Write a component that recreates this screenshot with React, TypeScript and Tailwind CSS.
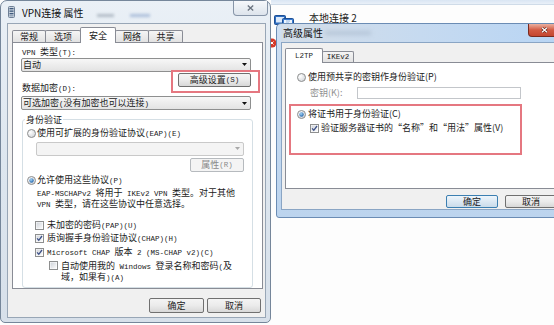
import { useId } from "react";
import type { ReactNode } from "react";

function sid(id: string) {
  return "g" + id.replace(/[^a-zA-Z0-9]/g, "");
}

function Mix({ text }: { text: string }) {
  const parts = text.split(/([\x20-\x7e]+)/).filter((p) => p.length > 0);
  return (
    <>
      {parts.map((p, i) =>
        /^[\x20-\x7e]+$/.test(p) ? (
          <span key={i} className="whitespace-pre font-['Liberation_Mono',monospace] text-[7.5px]">
            {p}
          </span>
        ) : (
          <span key={i}>{p}</span>
        )
      )}
    </>
  );
}

function CheckBox({ checked = false }: { checked?: boolean }) {
  const g = sid(useId());
  return (
    <svg width="9" height="9" viewBox="0 0 9 9" className="shrink-0">
      <defs>
        <linearGradient id={g} x1="0" y1="0" x2="1" y2="1">
          <stop offset="0" stopColor="#cfd3d9" />
          <stop offset="1" stopColor="#fbfbfb" />
        </linearGradient>
      </defs>
      <rect x="0.5" y="0.5" width="8" height="8" fill="#ffffff" stroke="#8e8f8f" />
      <rect x="1.5" y="1.5" width="6" height="6" fill={`url(#${g})`} />
      {checked && <path d="M2.1 4.3 L3.8 6.3 L7 2" fill="none" stroke="#3b4f86" strokeWidth="1.3" />}
    </svg>
  );
}

function Radio({ checked = false }: { checked?: boolean }) {
  const g = sid(useId());
  return (
    <svg width="9" height="9" viewBox="0 0 9 9" className="shrink-0">
      <defs>
        <radialGradient id={g + "a"} cx="0.35" cy="0.35" r="0.8">
          <stop offset="0" stopColor="#ffffff" />
          <stop offset="1" stopColor="#cdd1d6" />
        </radialGradient>
        <radialGradient id={g + "b"} cx="0.4" cy="0.35" r="0.7">
          <stop offset="0" stopColor="#a6d6f7" />
          <stop offset="1" stopColor="#1b5ea6" />
        </radialGradient>
      </defs>
      <circle cx="4.5" cy="4.5" r="4" fill={`url(#${g}a)`} stroke="#8e8f8f" />
      {checked && <circle cx="4.5" cy="4.5" r="2.2" fill={`url(#${g}b)`} />}
    </svg>
  );
}

function Arrow({ disabled = false }: { disabled?: boolean }) {
  return (
    <svg width="5" height="3" viewBox="0 0 5 3" className="shrink-0">
      <path d="M0 0 H5 L2.5 3 Z" fill={disabled ? "#a8a8a8" : "#111111"} />
    </svg>
  );
}

function Combo({ text, disabled = false, className = "" }: { text: string; disabled?: boolean; className?: string }) {
  return (
    <div
      className={`flex h-[14px] items-center justify-between rounded-[2px] border pl-[1px] pr-[3px] ${
        disabled ? "border-[#c9c9c9] bg-[#f4f4f4]" : "border-[#8e8f8f] bg-gradient-to-b from-[#f7f7f7] to-[#e3e3e3]"
      } ${className}`}
    >
      <span className="whitespace-nowrap leading-[10px]">
        <Mix text={text} />
      </span>
      <Arrow disabled={disabled} />
    </div>
  );
}

function Btn({
  children,
  className = "",
  disabled = false,
  def = false,
}: {
  children: ReactNode;
  className?: string;
  disabled?: boolean;
  def?: boolean;
}) {
  const look = disabled
    ? "border-[#b6babe] bg-[#f4f4f4] text-[#8a8a8a]"
    : def
    ? "border-[#3c7fb1] bg-gradient-to-b from-[#eef6fc] to-[#cadbea]"
    : "border-[#707070] bg-gradient-to-b from-[#f4f4f4] via-[#ebebeb] to-[#d8d8d8]";
  return (
    <div className={`flex shrink-0 items-center justify-center rounded-[2px] border leading-[10px] ${look} ${className}`}>
      {children}
    </div>
  );
}

function CheckRow({ checked, text, className = "" }: { checked?: boolean; text: string; className?: string }) {
  return (
    <div className={`flex h-[10px] items-center gap-[3px] whitespace-nowrap leading-[10px] ${className}`}>
      <CheckBox checked={checked} />
      <span>
        <Mix text={text} />
      </span>
    </div>
  );
}

const leftTabs = [
  { label: "常规", cls: "w-[34px]" },
  { label: "选项", cls: "-ml-px w-[36px]" },
  { label: "安全", cls: "-ml-px w-[36px]", sel: true },
  { label: "网络", cls: "-ml-px w-[34px]" },
  { label: "共享", cls: "-ml-px w-[35px]" },
];

function LeftWindow() {
  return (
    <div className="flex h-[323px] w-[271px] shrink-0 flex-col rounded-t-[7px] rounded-b-[5px] border border-[#75869a] bg-gradient-to-b from-[#eaf0f6] via-[#dde6ef] to-[#d7e0ea] pb-[4px] pl-[6px] pr-[4px]">
      {/* title bar */}
      <div className="flex h-[22px] shrink-0 items-start">
        <svg width="7" height="12" viewBox="0 0 7 12" className="ml-[1px] mt-[5px] shrink-0">
          <rect x="0.5" y="0.5" width="6" height="11" rx="1" fill="#c9d3de" stroke="#6f8096" />
          <rect x="1.5" y="2" width="4" height="1.3" fill="#3f5a7c" />
          <rect x="1.5" y="4.5" width="4" height="1.3" fill="#3f5a7c" />
          <rect x="1.5" y="7" width="4" height="1.3" fill="#3f5a7c" />
          <rect x="1.5" y="9.3" width="4" height="1" fill="#7f93ab" />
        </svg>
        <span className="ml-[7px] mt-[5px] whitespace-nowrap text-[10px] leading-[13px] text-[#111]">VPN连接 属性</span>
        <span className="ml-[13px] mt-[13px] h-[3px] w-[17px] bg-[#8c98a6] opacity-60 blur-[1.5px]" />
        <span className="ml-[16px] mt-[13px] h-[3px] w-[20px] bg-[#6f8fc0] opacity-50 blur-[1.5px]" />
        <div className="ml-auto mr-[-2px] flex h-[15px] w-[35px] items-center justify-center rounded-b-[4px] border border-t-0 border-[#8795a8] bg-gradient-to-b from-[#f6f8fb] to-[#dde4ec]">
          <svg width="7" height="6" viewBox="0 0 7 6">
            <path d="M0.8 0.6 L6.2 5.4 M6.2 0.6 L0.8 5.4" stroke="#6b7480" strokeWidth="1.4" />
          </svg>
        </div>
      </div>

      {/* client area */}
      <div className="flex flex-1 flex-col border border-[#98a6b6] bg-[#f0f0f0] pl-[4px] pr-[2px]">
        {/* tabs */}
        <div className="mt-[3px] flex h-[15px] items-end">
          {leftTabs.map((t) =>
            t.sel ? (
              <div
                key={t.label}
                className={`relative z-10 mb-[-1px] flex h-[16px] items-center justify-center rounded-t-[2px] border border-b-0 border-[#898c95] bg-white leading-[10px] ${t.cls}`}
              >
                {t.label}
              </div>
            ) : (
              <div
                key={t.label}
                className={`flex h-[12px] items-center justify-center rounded-t-[2px] border border-b-0 border-[#898c95] bg-gradient-to-b from-[#f5f5f5] to-[#e2e2e2] leading-[10px] ${t.cls}`}
              >
                {t.label}
              </div>
            )
          )}
        </div>

        {/* panel */}
        <div className="flex h-[247px] flex-col border border-[#898c95] bg-white pl-[8px]">
          <div className="ml-[1px] mt-[4px] h-[10px] whitespace-nowrap leading-[10px]">
            <Mix text="VPN 类型(T):" />
          </div>
          <Combo text="自动" className="mt-[1px] w-[230px]" />
          <div className="mt-[1px] flex h-[22px] w-[230px] justify-between">
            <div className="ml-[1px] self-end whitespace-nowrap leading-[10px]">
              <Mix text="数据加密(D):" />
            </div>
            <div className="relative self-start">
              <Btn className="h-[14px] w-[73px]">
                <Mix text="高级设置(S)" />
              </Btn>
              <div className="absolute -bottom-[6px] -left-[7px] -right-[9px] -top-[3px] border-2 border-[#e57780]" />
            </div>
          </div>
          <Combo text="可选加密(没有加密也可以连接)" className="mt-[2px] w-[230px]" />

          <fieldset className="ml-[1px] mt-[5px] w-[231px] rounded-[3px] border border-[#d5dfe5] pb-[4px] pl-[4px]">
            <legend className="ml-[-2px] px-[1px] leading-[10px]">身份验证</legend>
            <div className="mt-[4px] flex h-[10px] items-center gap-[1px] whitespace-nowrap leading-[10px]">
              <Radio />
              <span>
                <Mix text="使用可扩展的身份验证协议(EAP)(E)" />
              </span>
            </div>
            <Combo text="" disabled className="ml-[9px] mt-[3px] w-[208px]" />
            <Btn disabled className="ml-[163px] mt-[2px] h-[14px] w-[54px]">
              <Mix text="属性(R)" />
            </Btn>
            <div className="mt-[4px] flex h-[10px] items-center gap-[1px] whitespace-nowrap leading-[10px]">
              <Radio checked />
              <span>
                <Mix text="允许使用这些协议(P)" />
              </span>
            </div>
            <div className="ml-[10px] mt-[2px] whitespace-nowrap leading-[9px]">
              <div>
                <Mix text="EAP-MSCHAPv2 将用于 IKEv2 VPN 类型。对于其他" />
              </div>
              <div>
                <Mix text="VPN 类型，请在这些协议中任意选择。" />
              </div>
            </div>
            <CheckRow text="未加密的密码(PAP)(U)" className="ml-[8px] mt-[11px]" />
            <CheckRow checked text="质询握手身份验证协议(CHAP)(H)" className="ml-[8px] mt-[3px]" />
            <CheckRow checked text="Microsoft CHAP 版本 2 (MS-CHAP v2)(C)" className="ml-[8px] mt-[4px]" />
            <div className="ml-[22px] mt-[3px] flex items-start gap-[3px] whitespace-nowrap leading-[9px]">
              <CheckBox />
              <div>
                <div>
                  <Mix text="自动使用我的 Windows 登录名称和密码(及" />
                </div>
                <div>
                  <Mix text="域，如果有)(A)" />
                </div>
              </div>
            </div>
          </fieldset>
        </div>

        {/* buttons */}
        <div className="mr-[2px] mt-[9px] flex h-[15px] justify-end gap-[3px]">
          <Btn className="h-[15px] w-[55px]">确定</Btn>
          <Btn className="h-[15px] w-[54px]">取消</Btn>
        </div>
      </div>
    </div>
  );
}

function NetIcon() {
  return (
    <svg width="22" height="15" viewBox="0 0 22 15" className="ml-[3px] mt-[9px] shrink-0 overflow-visible">
      <rect x="0.5" y="1.5" width="11" height="9" rx="1" fill="#2d6cc0" stroke="#1d4f94" />
      <rect x="2" y="3" width="8" height="5.5" fill="#dbe9fa" />
      <rect x="8.5" y="4.5" width="11" height="9" rx="1" fill="#3a7bd0" stroke="#1d4f94" />
      <rect x="10" y="6" width="8" height="5.5" fill="#eef5fd" />
      <path d="M12 7 L16 7 M12 9 L15 9" stroke="#7fa8dc" strokeWidth="0.8" />
    </svg>
  );
}

function RightArea() {
  return (
    <div className="relative flex flex-1 flex-col bg-[#fdfdfd]">
      <div className="h-[5px] shrink-0 border-b border-[#cfdbe8] bg-gradient-to-b from-[#d9e5f3] to-[#e9f0f8]" />
      <svg width="6" height="10" viewBox="0 0 6 10" className="absolute left-0 top-[38px]">
        <circle cx="1" cy="5" r="4.5" fill="#d43a2a" />
        <path d="M-0.5 3.5 L2.5 6.5 M2.5 3.5 L-0.5 6.5" stroke="#fff" strokeWidth="1" />
      </svg>
      <div className="flex h-[18px] shrink-0 items-start">
        <NetIcon />
        <span className="ml-[13px] mt-[8px] whitespace-nowrap text-[10px] leading-[10px] text-[#222]">本地连接 2</span>
      </div>

      {/* dialog */}
      <div className="relative z-10 ml-[5px] flex h-[195px] w-[290px] shrink-0 flex-col rounded-t-[5px] rounded-b-[3px] border border-[#6b8cb4] bg-gradient-to-b from-[#cfe0f3] to-[#bcd4ee] pb-[7px] pl-[4px] pr-[4px]">
        <div className="flex h-[18px] shrink-0 items-center bg-gradient-to-r from-[#d3dde8] via-[#c6daf0] to-[#b8d5f4]">
          <span className="ml-[2px] whitespace-nowrap text-[10px] leading-[12px] text-[#111]">高级属性</span>
          <span className="ml-[2px] h-[4px] w-[46px] bg-[#9fb0c3] opacity-50 blur-[2px]" />
        </div>
        <div className="absolute right-[5px] top-0 flex h-[13px] w-[32px] items-center justify-center rounded-b-[4px] border border-t-0 border-[#7a2a1e] bg-gradient-to-b from-[#eab0a0] via-[#d25a43] to-[#c44630]">
          <svg width="7" height="6" viewBox="0 0 7 6">
            <path d="M1 0.8 L6 5.2 M6 0.8 L1 5.2" stroke="#5a1a10" strokeWidth="2.4" />
            <path d="M1 0.8 L6 5.2 M6 0.8 L1 5.2" stroke="#ffffff" strokeWidth="1.3" />
          </svg>
        </div>

        <div className="flex flex-1 flex-col border border-[#8aa5c4] bg-[#f0f0f0] pl-[3px]">
          <div className="mt-[5px] flex h-[14px] items-end">
            <div className="relative z-10 mb-[-1px] flex h-[15px] w-[38px] items-center justify-center rounded-t-[2px] border border-b-0 border-[#898c95] bg-white leading-[10px]">
              <Mix text="L2TP" />
            </div>
            <div className="-ml-px flex h-[11px] w-[32px] items-center justify-center rounded-t-[2px] border border-b-0 border-[#898c95] bg-gradient-to-b from-[#f5f5f5] to-[#e2e2e2] leading-[10px]">
              <Mix text="IKEv2" />
            </div>
          </div>
          <div className="flex h-[127px] w-[271px] flex-col border border-[#898c95] bg-white">
            <div className="ml-[11px] mt-[9px] flex h-[10px] items-center gap-[2px] whitespace-nowrap leading-[10px]">
              <Radio />
              <span>使用预共享的密钥作身份验证(P)</span>
            </div>
            <div className="ml-[24px] mt-[5px] flex h-[12px] items-center whitespace-nowrap leading-[10px]">
              <span className="w-[47px] text-[#8f8f8f]">密钥(K):</span>
              <div className="h-[12px] w-[164px] border border-[#c3c6ca] bg-white" />
            </div>
            <div className="ml-[3px] mt-[5px] h-[51px] w-[233px] border-2 border-[#e57780]">
              <div className="ml-[6px] mt-[3px] flex h-[10px] items-center gap-[2px] whitespace-nowrap leading-[10px]">
                <Radio checked />
                <span>将证书用于身份验证(C)</span>
              </div>
              <div className="ml-[19px] mt-[4px] flex h-[10px] items-center gap-[2px] whitespace-nowrap leading-[10px]">
                <CheckBox checked />
                <span>验证服务器证书的“名称”和“用法”属性(V)</span>
              </div>
            </div>
          </div>
          <div className="mt-[6px] flex h-[13px] justify-end gap-[7px] pr-[3px]">
            <Btn def className="h-[13px] w-[52px]">
              确定
            </Btn>
            <Btn className="h-[13px] w-[52px]">取消</Btn>
          </div>
        </div>
      </div>
    </div>
  );
}

export default function App() {
  return (
    <div className="flex h-[325px] w-[554px] overflow-hidden bg-[#fdfdfd] font-['Noto_Sans_CJK_SC',sans-serif] text-[9px] text-[#1b1b1b]">
      <LeftWindow />
      <RightArea />
    </div>
  );
}
